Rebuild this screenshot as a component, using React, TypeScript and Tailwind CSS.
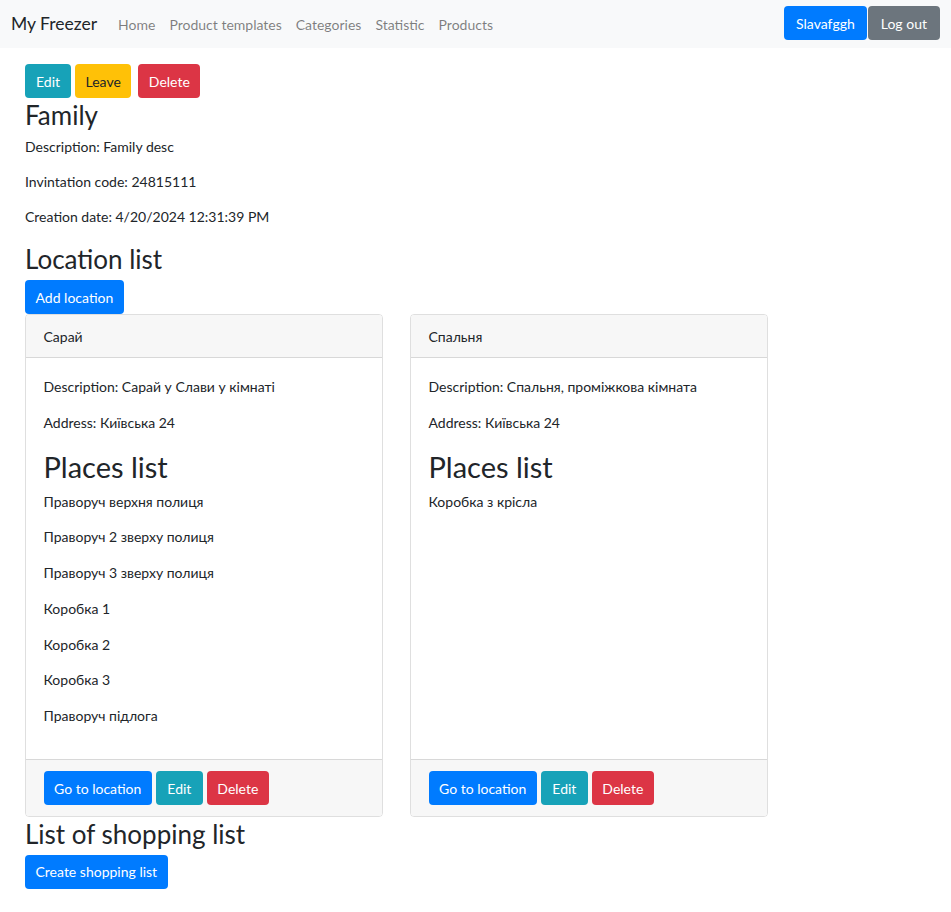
import React from "react";

const locations = [
  {
    name: "Сарай",
    desc: "Сарай у Слави у кімнаті",
    address: "Київська 24",
    places: [
      "Праворуч верхня полиця",
      "Праворуч 2 зверху полиця",
      "Праворуч 3 зверху полиця",
      "Коробка 1",
      "Коробка 2",
      "Коробка 3",
      "Праворуч підлога",
    ],
  },
  {
    name: "Спальня",
    desc: "Спальня, проміжкова кімната",
    address: "Київська 24",
    places: ["Коробка з крісла"],
  },
];

const btn = "inline-flex items-center h-[34px] px-[10.5px] rounded-[4px] text-[14px] leading-[21px]";
const primary = `${btn} bg-[#007bff] text-white`;
const info = `${btn} bg-[#17a2b8] text-white`;
const danger = `${btn} bg-[#dc3545] text-white`;
const h3 = "text-[26px] leading-[31px] pt-[2px] mb-[5px]";

function Navbar() {
  return (
    <nav className="flex items-center h-[48px] bg-[#f8f9fa] pl-[11px] pr-[11px]">
      <span className="text-[17.5px] leading-[26px] text-[#212529] mr-[14px]">My Freezer</span>
      <ul className="flex items-center text-[14px] text-black/50">
        {["Home", "Product templates", "Categories", "Statistic", "Products"].map((l) => (
          <li key={l} className="px-[7px]">
            {l}
          </li>
        ))}
      </ul>
      <div className="ml-auto flex items-center -mt-[2px]">
        <button className={`${primary} px-[12px]`}>Slavafggh</button>
        <button className={`${btn} bg-[#6c757d] text-white ml-px px-[13px]`}>Log out</button>
      </div>
    </nav>
  );
}

function LocationCard({ loc }: { loc: (typeof locations)[number] }) {
  return (
    <div className="w-[358px] flex flex-col border border-black/[.125] rounded-[4px] overflow-hidden">
      <div className="bg-[#f7f7f7] border-b border-black/[.125] px-[17.5px] py-[10.5px] leading-[21px]">
        {loc.name}
      </div>
      <div className="flex-1 p-[17.5px]">
        <p className="mb-[15px]">Description: {loc.desc}</p>
        <p className="mb-[15px]">Address: {loc.address}</p>
        <h2 className="text-[29px] leading-[36px] pt-px mb-[6px]">Places list</h2>
        {loc.places.map((p) => (
          <p key={p} className="mb-[14.8px]">
            {p}
          </p>
        ))}
      </div>
      <div className="bg-[#f7f7f7] border-t border-black/[.125] px-[17.5px] pt-[11.5px] pb-[10.5px] flex gap-[4px]">
        <button className={primary}>Go to location</button>
        <button className={`${info} px-[11.5px]`}>Edit</button>
        <button className={danger}>Delete</button>
      </div>
    </div>
  );
}

export default function App() {
  return (
    <div className="min-h-screen bg-white text-[#212529] text-[14px] leading-[21px] font-['Lato',sans-serif]">
      <Navbar />
      <main className="pl-[25px] pt-[16px]">
        <div className="flex">
          <button className={`${info} px-[11px]`}>Edit</button>
          <button className={`${btn} bg-[#ffc107] text-[#212529] ml-[4px]`}>Leave</button>
          <button className={`${danger} ml-[7px]`}>Delete</button>
        </div>
        <h3 className={h3}>Family</h3>
        <p className="mb-[14px]">Description: Family desc</p>
        <p className="mb-[14px]">Invintation code: 24815111</p>
        <p className="mb-[15px]">Creation date: 4/20/2024 12:31:39 PM</p>
        <h3 className={h3}>Location list</h3>
        <button className={primary}>Add location</button>
        <div className="flex gap-[27px]">
          {locations.map((l) => (
            <LocationCard key={l.name} loc={l} />
          ))}
        </div>
        <h3 className={h3}>List of shopping list</h3>
        <button className={primary}>Create shopping list</button>
      </main>
    </div>
  );
}
